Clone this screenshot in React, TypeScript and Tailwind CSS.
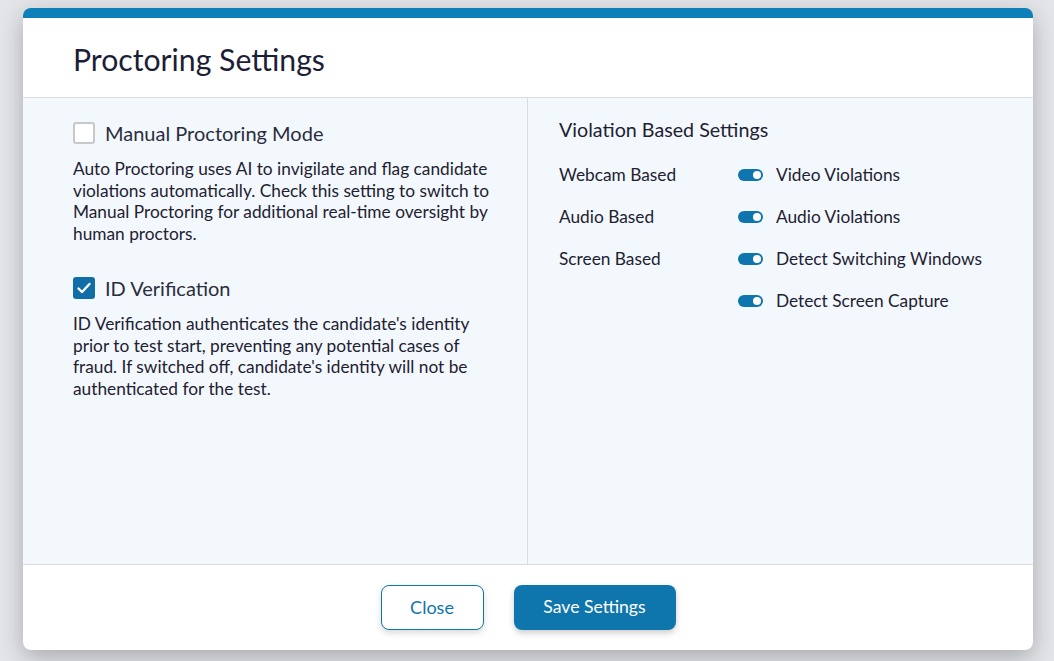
import { useState } from 'react'

interface ToggleRow {
  group: string
  label: string
}

const rows: ToggleRow[] = [
  { group: 'Webcam Based', label: 'Video Violations' },
  { group: 'Audio Based', label: 'Audio Violations' },
  { group: 'Screen Based', label: 'Detect Switching Windows' },
  { group: '', label: 'Detect Screen Capture' },
]

function Checkbox({ checked, onClick }: { checked: boolean; onClick: () => void }) {
  if (checked) {
    return (
      <button onClick={onClick} className="w-[22px] h-[22px] rounded-[3px] bg-[#0f6ea8] flex items-center justify-center shrink-0">
        <svg width="16" height="16" viewBox="0 0 16 16" fill="none">
          <path d="M2.5 8.5l3.5 3.5 7.5-8" stroke="white" strokeWidth="2.4" strokeLinecap="round" strokeLinejoin="round" />
        </svg>
      </button>
    )
  }
  return (
    <button onClick={onClick} className="w-[22px] h-[22px] rounded-[3px] border-2 border-[#c6c8cc] bg-white shrink-0" />
  )
}

function Toggle() {
  return (
    <span className="w-[25px] h-[12px] rounded-full bg-[#0f76ad] flex items-center justify-end pr-[2px] shrink-0">
      <span className="w-[8px] h-[8px] rounded-full bg-white" />
    </span>
  )
}

export default function App() {
  const [manual, setManual] = useState(false)
  const [idCheck, setIdCheck] = useState(true)

  return (
    <div
      className="w-full h-[661px] bg-[#e4e5e9] pt-[8px] px-[23px] text-[#1e2133]"
      style={{ fontFamily: 'Lato, "Open Sans", sans-serif' }}
    >
      <div className="w-[1010px] h-[642px] bg-white rounded-[8px] border-t-[10px] border-[#0d80ba] shadow-[0_8px_24px_rgba(0,0,0,0.25)] flex flex-col overflow-hidden">
        <div className="h-[80px] shrink-0 flex items-center px-[50px] pt-[4px] border-b border-[#d8dde2]">
          <h2 className="text-[30.2px] leading-none text-[#1b1e36]">Proctoring Settings</h2>
        </div>

        <div className="flex-1 grid grid-cols-2 bg-[#f3f8fc] border-b border-[#d8dde2]">
          <div className="border-r border-[#d8dde2] pl-[50px] pr-[30px] pt-[24px]">
            <div className="flex items-center gap-[10px]">
              <Checkbox checked={manual} onClick={() => setManual(!manual)} />
              <span className="text-[20px] leading-[22px] text-[#2a2d3e]">Manual Proctoring Mode</span>
            </div>
            <p className="mt-[14px] text-[17.3px] leading-[21.5px]">
              Auto Proctoring uses AI to invigilate and flag candidate violations automatically. Check this setting to switch to Manual Proctoring for additional real-time oversight by human proctors.
            </p>

            <div className="flex items-center gap-[10px] mt-[33px]">
              <Checkbox checked={idCheck} onClick={() => setIdCheck(!idCheck)} />
              <span className="text-[20px] leading-[22px] text-[#2a2d3e]">ID Verification</span>
            </div>
            <p className="mt-[14px] text-[17.3px] leading-[21.5px]">
              ID Verification authenticates the candidate's identity prior to test start, preventing any potential cases of fraud. If switched off, candidate's identity will not be authenticated for the test.
            </p>
          </div>

          <div className="pl-[31px] pt-[20px]">
            <h3 className="text-[19.7px] leading-[24px]">Violation Based Settings</h3>
            <div className="mt-[12px] flex flex-col">
              {rows.map((row) => (
                <div key={row.label} className="h-[42px] flex items-center text-[17.3px]">
                  <span className="w-[179px]">{row.group}</span>
                  <Toggle />
                  <span className="ml-[13px]">{row.label}</span>
                </div>
              ))}
            </div>
          </div>
        </div>

        <div className="h-[85px] shrink-0 flex items-center justify-center gap-[30px]">
          <button className="w-[103px] h-[45px] rounded-[8px] border border-[#0f76ad] bg-white text-[#0f76ad] text-[18px] shadow-[0_3px_6px_rgba(0,0,0,0.15)]">
            Close
          </button>
          <button className="w-[162px] h-[45px] rounded-[8px] bg-[#0f76ad] text-white text-[17.6px] shadow-[0_3px_6px_rgba(0,0,0,0.2)]">
            Save Settings
          </button>
        </div>
      </div>
    </div>
  )
}
